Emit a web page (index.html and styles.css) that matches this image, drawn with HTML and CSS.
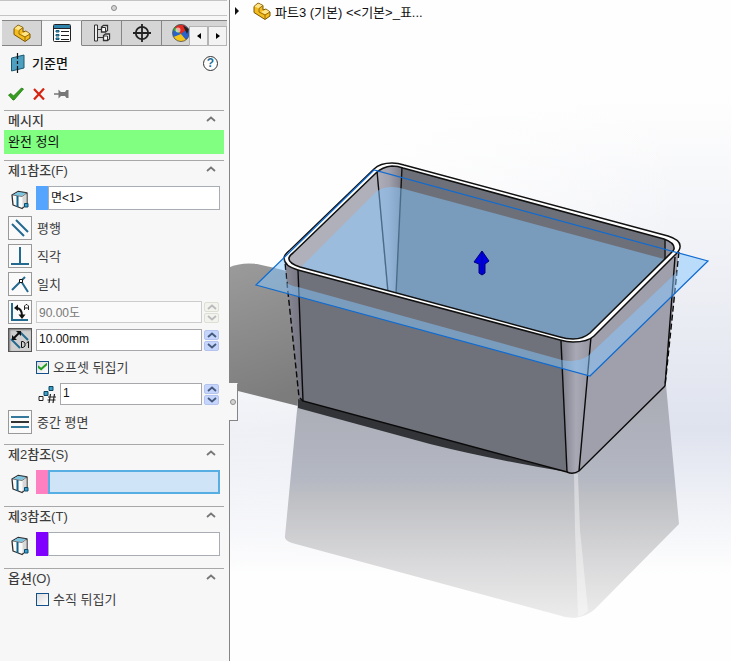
FILE: index.html
```html
<!DOCTYPE html>
<html lang="ko">
  <head>
    <meta charset="UTF-8">
    <meta name="viewport" content="width=device-width, initial-scale=1.0">
    <title>기준면</title>
    <link rel="stylesheet" href="styles.css">
  </head>
  <body>
    <!-- shared icons -->
    <svg class="defs" width="0" height="0" aria-hidden="true">
      <symbol id="part" viewBox="0 0 18 18">
        <path d="M1 4.500 L5 1 L10 3.500 V8 L13 7 L17 10 V14 L12 17.500 L1 10.500 Z" fill="#f3bd22" stroke="#7a5500" stroke-linejoin="round"/>
        <path d="M1.500 4.500 L5 1.500 L9.500 3.500 L6 6.500 Z M8 10 L13 7.500 L16.500 10 L12 12.500 Z" fill="#ffe58a"/>
        <path d="M6 6.500 V10 L12 13 V17 M12 13 L17 10 M6 6.500 L10 3.500" fill="none" stroke="#9b6c00"/>
      </symbol>
      <symbol id="cube" viewBox="0 0 18 20">
        <path d="M1 5 L7 1.500 L16 3 V14 L11 18.500 L2 15 Z" fill="#fafafa" stroke="#2e2e2e" stroke-width="1.300" stroke-linejoin="round"/>
        <path d="M11.500 7 L15.500 4 V14 L11.500 17.500 Z" fill="#d8d8d8"/>
        <path d="M2 5 L7 2 L15 3 L11 6 Z" fill="#7cc6e4"/>
        <path d="M1.500 5 L11 6.500 L16 3" fill="none" stroke="#555" stroke-width=".8"/>
        <path d="M6.500 6 V17" stroke="#12638c" stroke-width="2"/>
        <path d="M13.500 13.500 h3.500 v3.500 h-3.500 Z" fill="#3ba0cc" stroke="#0c4a6b"/>
      </symbol>
      <symbol id="up" viewBox="0 0 10 6">
        <path d="M1 5 L5 1.500 L9 5" fill="none" stroke="currentColor" stroke-width="1.800"/>
      </symbol>
      <symbol id="down" viewBox="0 0 10 6">
        <path d="M1 1 L5 4.500 L9 1" fill="none" stroke="currentColor" stroke-width="1.800"/>
      </symbol>
    </svg>

    <aside class="panel">
      <div class="grip"><span class="dot"></span></div>

      <nav class="tabs">
        <button class="tab" aria-label="FeatureManager"><svg width="18" height="18"><use href="#part"/></svg></button>
        <button class="tab active" aria-label="PropertyManager">
          <svg width="18" height="18" viewBox="0 0 18 18">
            <rect x=".5" y=".5" width="17" height="17" rx="1" fill="#fff" stroke="#222"/>
            <path d="M1 1 H17 V4 H1 Z" fill="#2d83ac"/>
            <path d="M1 4.500 H17" stroke="#222"/>
            <path d="M3 6.500 h3 v1.500 h-3 Z M3 10.500 h3 v1.500 h-3 Z M3 14 h3 v1.500 h-3 Z" fill="#48a6cc" stroke="#155b7c"/>
            <path d="M8 7.500 H16 M8 11.500 H16 M8 15.500 H16" stroke="#222"/>
          </svg>
        </button>
        <button class="tab" aria-label="ConfigurationManager">
          <svg width="18" height="18" viewBox="0 0 18 18" fill="none" stroke="#333">
            <path d="M4.500 1 H1.500 V17 H4.500 M4.500 1 V17" fill="#eee"/>
            <path d="M4.500 5.500 H9 M4.500 13.500 H10"/>
            <path d="M8.500 3 L10.500 1.500 H14.500 V6.500 L12.500 8 H8.500 Z M10.500 11.500 L12.500 10 H16.500 V15 L14.500 16.500 H10.500 Z" fill="#fff" stroke-width="1.300"/>
            <path d="M8.500 3.500 H12.500 V8 M10.500 12 H14.500 V16.500"/>
          </svg>
        </button>
        <button class="tab" aria-label="DimXpertManager">
          <svg width="18" height="18" viewBox="0 0 18 18" fill="none" stroke="#222" stroke-width="1.800">
            <circle cx="9" cy="9" r="6.200"/>
            <path d="M9 0 V18 M0 9 H18"/>
          </svg>
        </button>
        <button class="tab" aria-label="DisplayManager">
          <svg width="18" height="18" viewBox="0 0 18 18">
            <circle cx="9" cy="9" r="8.500" fill="#2a63c9"/>
            <path d="M9 10 L1 6 A8.500 8.500 0 0 1 9 .5 Z" fill="#3fa535"/>
            <path d="M9 10 L3 3 Q8 -1 13 1.500 L15 5 Z" fill="#e02a22"/>
            <path d="M9 10 L1.500 13 A8.500 8.500 0 0 0 14 16 Z" fill="#f5c518"/>
            <path d="M11 1.500 L17 5 L15 10 Z" fill="#222"/>
            <circle cx="6" cy="6" r="2.500" fill="#fff" opacity=".6"/>
            <circle cx="9" cy="9" r="8.500" fill="none" stroke="#555" stroke-width=".8"/>
          </svg>
        </button>
        <div class="tab-scroll">
          <button aria-label="이전 탭"><svg width="4" height="6" viewBox="0 0 4 6"><path d="M4 0 V6 L0 3 Z"/></svg></button>
          <button aria-label="다음 탭"><svg width="4" height="6" viewBox="0 0 4 6"><path d="M0 0 V6 L4 3 Z"/></svg></button>
        </div>
      </nav>

      <header class="title">
        <svg width="14" height="20" viewBox="0 0 14 20">
          <path d="M.5 5 L13 2 V15 L.5 18 Z" fill="#4e9fc0" stroke="#1d5871"/>
          <path d="M6.500 0 V6 M6.500 8 V11 M6.500 13 V20" stroke="#111" stroke-width="1.200"/>
        </svg>
        <h1>기준면</h1>
        <button class="help" aria-label="도움말">?</button>
      </header>

      <div class="actions">
        <button aria-label="확인"><svg width="16" height="14" viewBox="0 0 16 14"><path d="M0.500 8 L3 6.500 L5.500 9 L13.500 1 L15.500 2 L6 13 H5 Z" fill="#36a01e" stroke="#1d7a10" stroke-width=".8"/></svg></button>
        <button aria-label="취소"><svg width="12" height="12" viewBox="0 0 12 12"><path d="M1 1 L11 11.500 M11 .5 L1 11.500" stroke="#d62410" stroke-width="2.200"/></svg></button>
        <button aria-label="고정"><svg width="15" height="10" viewBox="0 0 15 10"><path d="M0 5 H5" stroke="#777" stroke-width="1.500"/><path d="M4.500 .5 L7 3 H11 L12.500 1 H14.500 V9 H12.500 L11 7 H7 L4.500 9.500 Z" fill="#777"/></svg></button>
      </div>

      <section class="group">
        <h2>메시지 <svg width="10" height="6"><use href="#up"/></svg></h2>
        <p class="message">완전 정의</p>
      </section>

      <section class="group">
        <h2>제1참조(F) <svg width="10" height="6"><use href="#up"/></svg></h2>
        <div class="pick">
          <svg width="18" height="20"><use href="#cube"/></svg>
          <span class="chip blue"></span>
          <input class="pick-box" type="text" aria-label="제1참조" value="면&lt;1&gt;">
        </div>
        <div class="rows">
          <div class="row">
            <button id="parallel" class="tool"><svg width="20" height="20" viewBox="0 0 20 20"><path d="M2 6 L14 18 M6 2 L18 14" stroke="#246a8f" stroke-width="2"/></svg></button>
            <label for="parallel">평행</label>
          </div>
          <div class="row">
            <button id="perpendicular" class="tool"><svg width="20" height="20" viewBox="0 0 20 20"><path d="M10 1 V18 M1 18 H19" stroke="#246a8f" stroke-width="2"/></svg></button>
            <label for="perpendicular">직각</label>
          </div>
          <div class="row">
            <button id="coincident" class="tool"><svg width="20" height="20" viewBox="0 0 20 20"><path d="M2 16 L15 3 M11 7 L18 18" stroke="#246a8f" stroke-width="2"/><path d="M9.500 5.500 h3 v3 h-3 Z" fill="#fff" stroke="#111"/></svg></button>
            <label for="coincident">일치</label>
          </div>
          <div class="row">
            <button class="tool" aria-label="각도">
              <svg width="20" height="20" viewBox="0 0 20 20" fill="none">
                <path d="M2 1 V18 H18" stroke="#246a8f" stroke-width="2"/>
                <path d="M6 6 Q12 6 12 14" stroke="#111" stroke-width="2"/>
                <path d="M4 6 L8 2.500 V9 Z M12 17 L8.500 12.500 H15.500 Z" fill="#111"/>
                <path d="M14.500 8 V4 L16 2.500 H17 L18.500 4 V8 M14.500 6 H18.500" stroke="#222"/>
              </svg>
            </button>
            <input class="value" type="text" aria-label="각도" value="90.00도" disabled>
            <div class="spin off">
              <button aria-label="각도 증가" disabled><svg width="10" height="6"><use href="#up"/></svg></button>
              <button aria-label="각도 감소" disabled><svg width="10" height="6"><use href="#down"/></svg></button>
            </div>
          </div>
          <div class="row">
            <button class="tool pressed" aria-label="오프셋 거리">
              <svg width="20" height="20" viewBox="0 0 20 20" fill="none">
                <path d="M1 9 L10 18 M10 2 L18 10" stroke="#246a8f" stroke-width="2"/>
                <path d="M4 8 L9 3" stroke="#111" stroke-width="2"/>
                <path d="M2 10 V5 L7 10 Z M11 1 V6 L6 1 Z" fill="#111"/>
                <path d="M11.500 11.500 V17.500 H13 L15 16 V13 L13 11.500 Z M16.500 13 L18.500 11.500 V18" stroke="#111"/>
              </svg>
            </button>
            <input class="value" type="text" aria-label="오프셋 거리" value="10.00mm">
            <div class="spin">
              <button aria-label="거리 증가"><svg width="10" height="6"><use href="#up"/></svg></button>
              <button aria-label="거리 감소"><svg width="10" height="6"><use href="#down"/></svg></button>
            </div>
          </div>
          <div class="check-row">
            <input type="checkbox" id="flip-offset" checked>
            <label for="flip-offset">오프셋 뒤집기</label>
          </div>
          <div class="row indent">
            <svg width="20" height="18" viewBox="0 0 20 18" fill="none">
              <path d="M2 11.500 h4 v4 h-4 Z" stroke="#222" fill="#fff"/>
              <path d="M7 6.500 h4 v4 h-4 Z M12 1.500 h4 v4 h-4 Z" fill="#3d9cc4" stroke="#0d4460"/>
              <path d="M13.500 9 L12 18 M17.500 9 L16 18 M11 12 H19 M10.500 15 H18.500" stroke="#222" stroke-width="1.200"/>
            </svg>
            <input class="value" type="text" aria-label="기준면 수" value="1">
            <div class="spin">
              <button aria-label="개수 증가"><svg width="10" height="6"><use href="#up"/></svg></button>
              <button aria-label="개수 감소"><svg width="10" height="6"><use href="#down"/></svg></button>
            </div>
          </div>
          <div class="row">
            <button id="midplane" class="tool"><svg width="20" height="20" viewBox="0 0 20 20"><path d="M1 5 H19 M1 15 H19" stroke="#34789c" stroke-width="2"/><path d="M1 10 H19" stroke="#333" stroke-width="2"/></svg></button>
            <label for="midplane">중간 평면</label>
          </div>
        </div>
      </section>

      <section class="group">
        <h2>제2참조(S) <svg width="10" height="6"><use href="#up"/></svg></h2>
        <div class="pick">
          <svg width="18" height="20"><use href="#cube"/></svg>
          <span class="chip pink"></span>
          <input class="pick-box current" type="text" aria-label="제2참조">
        </div>
      </section>

      <section class="group">
        <h2>제3참조(T) <svg width="10" height="6"><use href="#up"/></svg></h2>
        <div class="pick">
          <svg width="18" height="20"><use href="#cube"/></svg>
          <span class="chip purple"></span>
          <input class="pick-box" type="text" aria-label="제3참조">
        </div>
      </section>

      <section class="group">
        <h2>옵션(O) <svg width="10" height="6"><use href="#up"/></svg></h2>
        <div class="check-row">
          <input type="checkbox" id="flip-normal">
          <label for="flip-normal">수직 뒤집기</label>
        </div>
      </section>

      <button class="collapse" aria-label="패널 접기"><span class="dot"></span></button>
    </aside>

    <main class="viewport">
      <div class="tree">
        <svg width="4" height="8" viewBox="0 0 4 8"><path d="M0 0 V8 L4 4 Z" fill="#111"/></svg>
        <svg class="tree-icon" width="18" height="18"><use href="#part"/></svg>
        <span>파트3 (기본) &lt;&lt;기본&gt;_표...</span>
      </div>

      <svg class="scene" viewBox="230 0 501 661" preserveAspectRatio="xMinYMin slice" role="img" aria-label="상자 모델">
        <defs>
          <linearGradient id="sky" x1="0" y1="0" x2="0" y2="1">
            <stop offset=".15" stop-color="#fefefe"/>
            <stop offset=".45" stop-color="#eceef4"/>
            <stop offset=".65" stop-color="#dfe3ee"/>
            <stop offset=".75" stop-color="#eef0f6"/>
            <stop offset=".87" stop-color="#fefefe"/>
          </linearGradient>
          <radialGradient id="haze" cx="230" cy="130" r="460" gradientUnits="userSpaceOnUse">
            <stop offset=".3" stop-color="#fefefe"/>
            <stop offset="1" stop-color="#fefefe" stop-opacity="0"/>
          </radialGradient>
          <linearGradient id="shadow" x1="0" y1="0" x2=".2" y2="1">
            <stop offset="0" stop-color="#9b9b9b"/>
            <stop offset="1" stop-color="#7c7c7c"/>
          </linearGradient>
          <linearGradient id="mirror" x1="0" y1="385" x2="0" y2="618" gradientUnits="userSpaceOnUse">
            <stop offset="0" stop-color="#a9aab4"/>
            <stop offset=".4" stop-color="#b4b8c2"/>
            <stop offset=".5" stop-color="#c0c1c5"/>
            <stop offset=".75" stop-color="#d8d8da"/>
            <stop offset="1" stop-color="#ececec"/>
          </linearGradient>
          <linearGradient id="corner" x1="0" y1="0" x2="1" y2="0">
            <stop offset="0" stop-color="#7d7e89"/>
            <stop offset=".5" stop-color="#a9a9b5"/>
            <stop offset="1" stop-color="#9696a3"/>
          </linearGradient>
          <linearGradient id="side-corner" x1="0" y1="0" x2="1" y2="0">
            <stop offset="0" stop-color="#8b8c98"/>
            <stop offset="1" stop-color="#72737e"/>
          </linearGradient>
          <linearGradient id="inner-corner" x1="0" y1="0" x2="1" y2="0">
            <stop offset="0" stop-color="#b0b0bc"/>
            <stop offset=".5" stop-color="#a2a2ae"/>
            <stop offset="1" stop-color="#7b7c87"/>
          </linearGradient>
          <clipPath id="opening">
            <path d="M376 173 Q382 167 392 166 Q398 166 403 168 L664 239 Q675 243 674 249 Q674 250 671 253 L590 333 Q583 339 573 339 Q566 339 560 337 L300 267 Q288 263 289 258 Q289 256 293 253 Z"/>
          </clipPath>
        </defs>

        <rect x="230" width="1600" height="1600" fill="#fefefe"/>
        <rect x="230" width="1600" height="661" fill="url(#sky)"/>
        <rect x="230" width="1600" height="661" fill="url(#haze)"/>

        <!-- floor shadow and reflection -->
        <path d="M230 267 Q242 262 257 264 Q272 267 290 272 L310 409 L230 389 Z" fill="url(#shadow)"/>
        <path d="M298 400 L572 474 L666 385 L679 524 L595 609 Q588 616 574 618 Q566 618 558 615 L292 543 Q284 540 285 536 Z" fill="url(#mirror)"/>
        <path d="M574 474 H578 L580 530 L588 611 Q584 615 578 617 L575 530 Z" fill="#fff" opacity=".4"/>
        <path d="M298 399 L567 472 Q490 459 430 444 L298 408 Z" fill="#333438"/>

        <!-- outer walls -->
        <path d="M284 258 L298 269 L303 401 L299 398 Z" fill="url(#side-corner)"/>
        <path d="M298 268 L561 340 L567 472 L303 401 Z" fill="#70727b"/>
        <path d="M590 337 L679 250 L665 386 L579 471 Z" fill="#a0a0ad"/>
        <path d="M561 340 L591 336 L579 471 Q573 475 567 472 Z" fill="url(#corner)"/>
        <g fill="none" stroke="#0a0a0a" stroke-width="1.400">
          <path d="M298 270 L303 401 L567 472 Q573 475 579 471 L665 386"/>
          <path d="M561 341 L567 472 M591 337 L579 471 M675 257 L665 386"/>
          <path d="M285 264 L299 397 L303 401 M679 252 L665 386" stroke-dasharray="6 3"/>
        </g>

        <!-- rim -->
        <path d="M374 169 Q380 163 392 163 Q398 163 404 165 L668 236 Q681 240 680 247 Q680 250 676 254 L594 336 Q588 342 573 342 Q567 342 560 340 L298 270 Q284 266 284 258 Q284 255 290 250 Z" fill="#fff" stroke="#111" stroke-width="1.500"/>

        <!-- inside of the box -->
        <g clip-path="url(#opening)">
          <rect x="280" y="160" width="400" height="185" fill="#6e7079"/>
          <path d="M376 165 L388 300 H280 V165 Z" fill="#b0b0bb"/>
          <path d="M376 165 H402 L396 300 H388 Z" fill="url(#inner-corner)"/>
          <path d="M665 236 H680 V258 H664 Z" fill="#92929c"/>
          <path d="M377 171 L388 292 M402 167 L396 294 M665 238 V260" fill="none" stroke="#111" stroke-width="1.400"/>
          <path d="M301 267 L376 192 Q382 187 392 187 Q398 187 404 189 L664 259 L670 262 V345 H301 Z" fill="#86c8ff" opacity=".5"/>
        </g>
        <path d="M376 173 Q382 167 392 166 Q398 166 403 168 L664 239 Q675 243 674 249 Q674 250 671 253 L590 333 Q583 339 573 339 Q566 339 560 337 L300 267 Q288 263 289 258 Q289 256 293 253 Z" fill="none" stroke="#111" stroke-width="1.600"/>

        <!-- reference plane -->
        <path d="M256 285 L284 258 L287 283 Q291 286 298 287 L562 360 Q577 363 588 356 L677 272 L680 253 L708 261 L590 376 Z" fill="#86c8ff" opacity=".5"/>
        <path d="M256 285 L374 170 L708 261 L590 376 Z" fill="none" stroke="#0f6bd0" stroke-width="1.200"/>

        <path d="M482 251 L489 261 L485 264 V273 L482 275 L479 273 V264 L474 262 Z" fill="#0000e6" stroke="#000078"/>
        <path d="M482 252 V274" stroke="#000090"/>
      </svg>
    </main>
  </body>
</html>
```
FILE: styles.css
```css
* {
    box-sizing: border-box;
}

body {
    margin: 0;
    display: grid;
    grid-template-columns: 230px 1fr;
    min-height: 100vh;
    font-family: "Liberation Sans", "Noto Sans CJK KR", sans-serif;
    font-size: 13px;
    color: #3c3c3c;
    background-color: #fefefe;
}

svg {
    display: block;
    flex-shrink: 0;
}

.defs {
    position: absolute;
}

button {
    display: flex;
    align-items: center;
    justify-content: center;
    padding: 0;
    border: none;
    background: none;
    font: inherit;
}

input {
    min-width: 0;
    margin: 0;
    border-radius: 0;
    font: inherit;
}

.panel {
    position: relative;
    background-color: #f7f7f7;
    border-right: 1px solid #858585;
}

.grip {
    display: flex;
    align-items: center;
    justify-content: center;
    height: 16px;
    margin-right: 2px;
    border-top: 1px solid #c4c4c4;
    border-bottom: 1px solid #c4c4c4;
}

.dot {
    flex-shrink: 0;
    width: 6px;
    height: 6px;
    border: 1px solid #8c8c8c;
    border-radius: 50%;
    background-color: #d4d4d4;
}

/* tabs */
.tabs {
    display: flex;
    height: 26px;
    margin: 4px 2px 0;
}

.tab {
    flex: 0 0 40px;
    border: 1px solid #858585;
    border-left: none;
    background-color: #d5d5d5;
}

.tab.active {
    border-top-color: #b0b0b0;
    border-bottom-color: #f7f7f7;
    background-color: #f7f7f7;
}

.tab:nth-child(5) {
    flex: 0 1 27px;
    justify-content: flex-start;
    padding-left: 10px;
    overflow: hidden;
    border-right: none;
}

.tab-scroll {
    flex: 1;
    display: flex;
    padding-top: 5px;
    border-top: 1px solid #858585;
    background-color: #d5d5d5;
}

.tab-scroll button {
    flex: 1;
    border: 1px solid #b4b4b4;
    background-color: #f3f3f3;
}

/* title */
.title {
    display: flex;
    align-items: center;
    height: 34px;
    padding: 0 11px;
}

.title h1 {
    flex: 1;
    margin: 0 0 0 7px;
    padding-bottom: 2px;
    font-size: 13px;
    font-weight: 500;
    color: #111;
}

.help {
    width: 15px;
    height: 15px;
    border: 1px solid #333;
    border-radius: 50%;
    background-color: #fff;
    color: #1f6d98;
    font-size: 12px;
    font-weight: bold;
}

.actions {
    display: flex;
    align-items: center;
    gap: 9px;
    height: 30px;
    padding: 0 0 2px 8px;
}

/* groups */
.group {
    margin: 0 5px 0 4px;
    border-top: 1px solid #a8a8a8;
}

.group h2 {
    display: flex;
    align-items: center;
    justify-content: space-between;
    height: 19px;
    margin: 0;
    padding: 0 8px 3px 4px;
    font-size: 13px;
    font-weight: 500;
}

.group h2 svg {
    color: #777;
}

.message {
    height: 24px;
    margin: 0 0 6px;
    padding-left: 4px;
    line-height: 24px;
    color: #111;
    background-color: #80ff80;
}

.pick {
    display: flex;
    align-items: center;
    padding: 6px 4px 12px 7px;
}

.pick svg {
    margin-top: 4px;
}

.chip {
    width: 12px;
    height: 24px;
    margin-left: 7px;
}

.chip.blue {
    background-color: #55a5ff;
}

.chip.pink {
    background-color: #ff80c0;
}

.chip.purple {
    background-color: #8000ff;
}

.pick-box {
    flex: 1;
    height: 24px;
    padding: 0 2px 3px;
    border: 1px solid #a8acb3;
    background-color: #fff;
    font-size: 12px;
    color: #111;
}

.pick-box.current {
    border: 2px solid #56aee2;
    background-color: #cfe4f7;
}

.rows {
    display: grid;
    grid-template-columns: minmax(0, 1fr);
    gap: 4px;
    margin-top: -6px;
    padding: 0 4px 10px;
}

.row {
    display: flex;
    align-items: center;
    height: 24px;
}

.row label {
    margin-left: 5px;
    padding-bottom: 2px;
}

.row.indent {
    padding-left: 29px;
}

.row.indent .value {
    margin-left: 3px;
}

.tool {
    flex-shrink: 0;
    width: 24px;
    height: 24px;
    border: 1px solid #999;
    background-color: #fafafa;
}

.tool.pressed {
    border: 1px solid #555;
    background-color: #cfcfcf;
    box-shadow: inset 1px 1px 2px #777;
}

.value {
    flex: 1;
    height: 22px;
    margin-left: 4px;
    padding: 0 2px 2px;
    border: 1px solid #a8a8ac;
    background-color: #fff;
    font-size: 12px;
    color: #111;
}

.value:disabled {
    border-color: #ccc;
    background-color: #fafafa;
    color: #777;
}

.spin {
    display: grid;
    gap: 1px;
    margin: 0 1px 0 2px;
}

.spin button {
    width: 15px;
    height: 10px;
    border: 1px solid #b4c4ee;
    border-radius: 2px;
    background-color: #c6d5fb;
    color: #44597c;
}

.spin.off button {
    border-color: #deded2;
    background-color: #f2f2ee;
    color: #bbb;
}

.check-row {
    display: flex;
    align-items: center;
    height: 22px;
    padding-left: 28px;
}

.group > .check-row {
    margin: 0 4px;
}

.check-row label {
    margin-left: 4px;
    padding-bottom: 2px;
}

input[type="checkbox"] {
    appearance: none;
    width: 13px;
    height: 13px;
    border: 1px solid #14508a;
    background: linear-gradient(135deg, #dcdcdc, #fff);
}

input[type="checkbox"]:checked::after {
    content: "";
    display: block;
    width: 9px;
    height: 8px;
    margin: 1px;
    background-color: #22a022;
    clip-path: polygon(0 35%, 35% 65%, 100% 0, 100% 35%, 35% 100%, 0 70%);
}

.collapse {
    position: absolute;
    top: 383px;
    right: -9px;
    width: 9px;
    height: 38px;
    border: 1px solid #858585;
    border-top-color: #f7f7f7;
    border-left: none;
    background-color: #f7f7f7;
    z-index: 1;
}

/* graphics area */
.viewport {
    position: relative;
    min-width: 0;
    overflow: hidden;
}

.scene {
    width: 100%;
    height: 100vh;
}

.tree {
    position: absolute;
    top: 2px;
    left: 5px;
    display: flex;
    align-items: center;
    height: 18px;
    color: #111;
    white-space: nowrap;
}

.tree-icon {
    margin: 0 4px 0 14px;
}
```
